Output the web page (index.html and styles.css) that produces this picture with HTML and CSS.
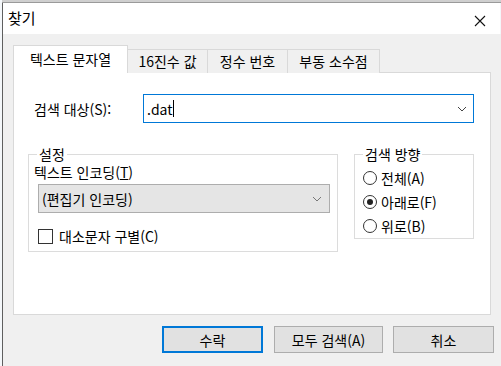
FILE: index.html
```html
<!DOCTYPE html>
<html lang="ko">
<head>
  <meta charset="UTF-8" />
  <title>찾기</title>
  <link rel="stylesheet" href="styles.css">
</head>
<body>
  <div class="backdrop"></div>

  <div class="window">
    <div class="titlebar">
      <span class="title">찾기</span>
      <svg class="close" width="12" height="12" viewBox="0 0 12 12">
        <path d="M1 1 L11 11 M11 1 L1 11" stroke="#111" stroke-width="1.1" fill="none"/>
      </svg>
    </div>

    <div class="dialog">
      <div class="tabs">
        <div class="tab active">텍스트 문자열</div>
        <div class="tab hex">16진수 값</div>
        <div class="tab int">정수 번호</div>
        <div class="tab float">부동 소수점</div>
      </div>

      <div class="page">
        <div class="search-row">
          <span class="search-label">검색 대상(S):</span>
          <div class="search-box">
            <span class="search-value">.dat</span><span class="caret"></span>
            <svg class="chevron" width="10" height="6" viewBox="0 0 10 6">
              <path d="M1 1 L5 5 L9 1" stroke="#444" stroke-width="1" fill="none"/>
            </svg>
          </div>
        </div>

        <div class="groups">
          <fieldset class="group settings">
            <legend>설정</legend>
            <div class="line">텍스트 인코딩(<u>T</u>)</div>
            <div class="combo">
              <span>(편집기 인코딩)</span>
              <svg class="chevron" width="10" height="6" viewBox="0 0 10 6">
                <path d="M1 1 L5 5 L9 1" stroke="#777" stroke-width="1" fill="none"/>
              </svg>
            </div>
            <div class="check-row">
              <span class="checkbox"></span>
              <span>대소문자 구별(C)</span>
            </div>
          </fieldset>

          <fieldset class="group direction">
            <legend>검색 방향</legend>
            <div class="radio-row">
              <span class="radio"></span>
              <span>전체(A)</span>
            </div>
            <div class="radio-row">
              <span class="radio checked"></span>
              <span>아래로(F)</span>
            </div>
            <div class="radio-row">
              <span class="radio"></span>
              <span>위로(B)</span>
            </div>
          </fieldset>
        </div>
      </div>

      <div class="buttons">
        <button class="btn default">수락</button>
        <button class="btn all">모두 검색(A)</button>
        <button class="btn cancel">취소</button>
      </div>
    </div>
  </div>
</body>
</html>
```

FILE: styles.css
```css
body {
  margin: 0;
  padding: 0;
  width: 501px;
  height: 366px;
  overflow: hidden;
  background-color: #f4f7fa;
  font-family: "Noto Sans CJK KR", "Noto Sans", sans-serif;
  font-size: 14px;
  color: #000;
}

.backdrop {
  height: 2px;
  margin-left: 2px;
  background-color: #cfcfcf;
  border-bottom: 1px solid #9a9a9a;
}

.window {
  margin-left: 2px;
  width: 520px;
  border-left: 1px solid #5f5f5f;
}

.titlebar {
  height: 31px;
  background-color: #fff;
  display: flex;
  align-items: center;
  justify-content: space-between;
  padding: 0 14px 0 5px;
  width: 478px;
}

.title {
  font-size: 15px;
  line-height: 20px;
  margin-top: -2px;
}

.close {
  margin-top: 4px;
}

.dialog {
  background-color: #f0f0f0;
  padding: 11px 0 0 10px;
  height: 332px;
  box-sizing: border-box;
}

.tabs {
  display: flex;
  align-items: flex-end;
  height: 28px;
  margin-bottom: -1px;
  position: relative;
  z-index: 1;
}

.tab {
  height: 24px;
  line-height: 23px;
  text-align: center;
  background-color: #f0f0f0;
  border: 1px solid #d9d9d9;
  border-bottom: none;
  margin-right: -1px;
  box-sizing: border-box;
}

.tab.active {
  height: 28px;
  width: 115px;
  line-height: 27px;
  background-color: #fff;
  padding-bottom: 2px;
}

.tab.hex { width: 81px; }
.tab.int { width: 81px; }
.tab.float { width: 93px; }

.page {
  width: 478px;
  height: 243px;
  box-sizing: border-box;
  background-color: #fff;
  border: 1px solid #d9d9d9;
  padding: 21px 0 0 14px;
}

.search-row {
  display: flex;
  align-items: center;
  height: 29px;
}

.search-label {
  width: 109px;
  padding-left: 6px;
}

.search-box {
  width: 331px;
  height: 29px;
  box-sizing: border-box;
  border: 1px solid #0078d7;
  display: flex;
  align-items: center;
  padding-left: 3px;
}

.search-value {
  line-height: 18px;
}

.caret {
  width: 1px;
  height: 17px;
  background-color: #000;
}

.search-box .chevron {
  margin-left: auto;
  margin-right: 6px;
}

.groups {
  display: flex;
  align-items: flex-start;
  gap: 16px;
  margin-top: 24px;
}

.group {
  margin: 0;
  border: 1px solid #dcdcdc;
  box-sizing: border-box;
  min-width: 0;
}

.group legend {
  padding: 0 2px;
  line-height: 14px;
  margin-left: 3px;
}

.settings {
  width: 310px;
  padding: 2px 7px 6px 5px;
}

.line {
  line-height: 18px;
}

.combo {
  margin: 3px 0 0 4px;
  height: 29px;
  box-sizing: border-box;
  background-color: #e5e5e5;
  border: 1px solid #adadad;
  display: flex;
  align-items: center;
  justify-content: space-between;
  padding: 0 7px 0 3px;
}

.check-row {
  display: flex;
  align-items: center;
  margin: 14px 0 0 4px;
  line-height: 18px;
}

.checkbox {
  width: 13px;
  height: 13px;
  border: 1px solid #333;
  background-color: #fff;
  margin-right: 6px;
}

.direction {
  width: 120px;
  padding: 5px 4px 0 8px;
}

.direction legend {
  margin-left: 0;
}

.radio-row {
  display: flex;
  align-items: center;
  height: 24px;
}

.radio {
  width: 12px;
  height: 12px;
  border: 1px solid #333;
  border-radius: 50%;
  margin-right: 4px;
  display: flex;
  align-items: center;
  justify-content: center;
}

.radio.checked::after {
  content: "";
  width: 6px;
  height: 6px;
  border-radius: 50%;
  background-color: #222;
}

.buttons {
  display: flex;
  margin-top: 11px;
  padding-left: 149px;
}

.btn {
  height: 27px;
  box-sizing: border-box;
  background-color: #e1e1e1;
  border: 1px solid #adadad;
  font-family: inherit;
  font-size: 14px;
  color: #000;
  padding: 0;
}

.btn.default {
  width: 101px;
  border: 2px solid #0078d7;
}

.btn.all {
  width: 109px;
  margin-left: 11px;
}

.btn.cancel {
  width: 101px;
  margin-left: 10px;
}
```
